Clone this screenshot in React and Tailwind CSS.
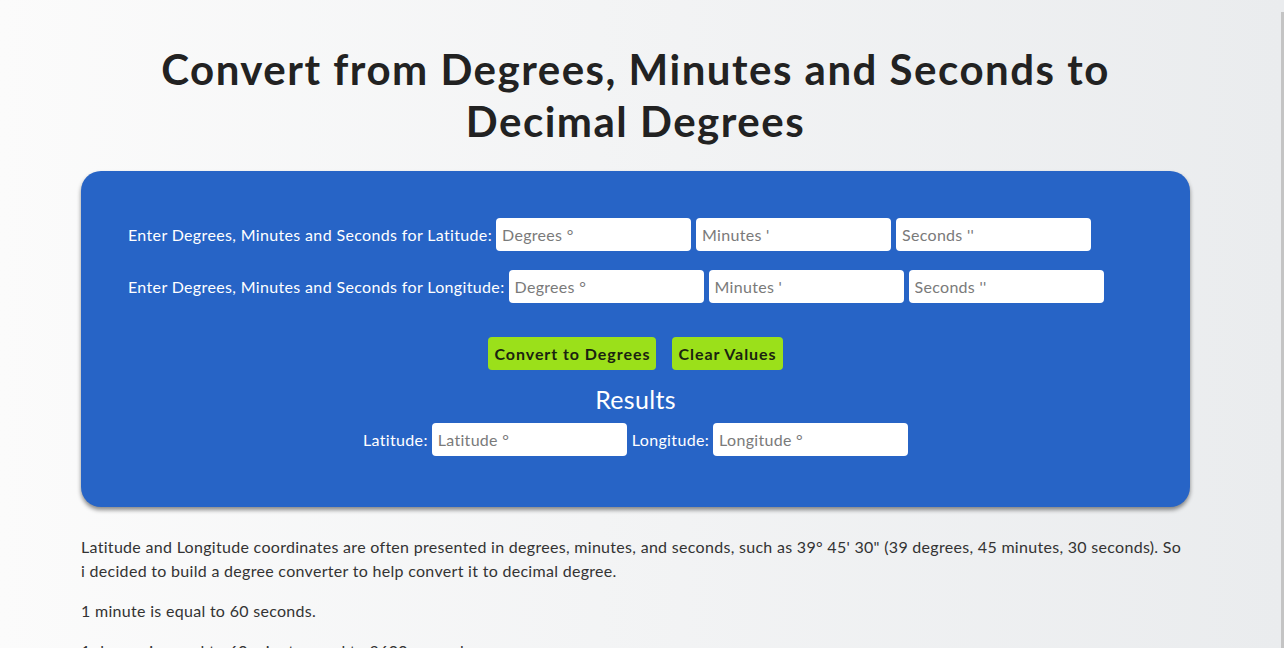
import React from "react";

function Field({ placeholder }) {
  return (
    <input
      type="text"
      placeholder={placeholder}
      className="h-[33px] w-[195px] rounded-[4px] bg-white px-[6px] text-[16px] tracking-[0.3px] text-[#222] placeholder:text-[#7a7a7a] outline-none"
    />
  );
}

export default function App() {
  return (
    <div className="relative min-h-[648px] w-full overflow-hidden bg-linear-to-r from-[#fbfbfb] to-[#eaecee] font-['Lato',sans-serif]">
      <div className="fixed right-0 top-[12px] h-full w-[3px] bg-[#c4c4c4]" />
      <div className="ml-[81px] w-[1109px]">
        <h1 className="pt-[43px] text-center text-[42px] font-bold leading-[52px] tracking-[1.5px] text-[#222]">
          Convert from Degrees, Minutes and Seconds to
          <br />
          Decimal Degrees
        </h1>

        <div className="mt-[24px] rounded-[20px] bg-[#2764c6] px-[47px] pb-[51px] pt-[47px] text-white shadow-[0_3px_4px_rgba(0,0,0,0.45)]">
          <div className="flex items-center gap-[5px] text-[16px] tracking-[0.35px]">
            <span className="mr-[-1px]">Enter Degrees, Minutes and Seconds for Latitude:</span>
            <Field placeholder="Degrees °" />
            <Field placeholder="Minutes '" />
            <Field placeholder={"Seconds ''"} />
          </div>
          <div className="mt-[19px] flex items-center gap-[5px] text-[16px] tracking-[0.35px]">
            <span className="mr-[-1px]">Enter Degrees, Minutes and Seconds for Longitude:</span>
            <Field placeholder="Degrees °" />
            <Field placeholder="Minutes '" />
            <Field placeholder={"Seconds ''"} />
          </div>

          <div className="mt-[34px] flex justify-center gap-[16px]">
            <button className="h-[33px] rounded-[4px] bg-[#9be01a] px-[6px] text-[16px] font-bold tracking-[0.95px] text-[#1a2310]">
              Convert to Degrees
            </button>
            <button className="h-[33px] rounded-[4px] bg-[#9be01a] px-[6px] text-[16px] font-bold tracking-[0.95px] text-[#1a2310]">
              Clear Values
            </button>
          </div>

          <div className="mt-[13px] text-center text-[25px] leading-[32px] tracking-[0.3px]">Results</div>
          <div className="mt-[8px] flex items-center justify-center gap-[4px] text-[16px] tracking-[0.35px]">
            <span>Latitude:</span>
            <Field placeholder="Latitude °" />
            <span className="ml-[1px]">Longitude:</span>
            <Field placeholder="Longitude °" />
          </div>
        </div>

        <div className="mt-[28px] text-[16px] leading-[24px] tracking-[0.3px] text-[#333]">
          <p>
            Latitude and Longitude coordinates are often presented in degrees, minutes, and seconds, such as 39° 45' 30" (39 degrees, 45 minutes, 30 seconds). So
            <br />
            i decided to build a degree converter to help convert it to decimal degree.
          </p>
          <p className="mt-[16px]">1 minute is equal to 60 seconds.</p>
          <p className="mt-[16px]">1 degree is equal to 60 minutes, and to 3600 seconds.</p>
        </div>
      </div>
    </div>
  );
}
